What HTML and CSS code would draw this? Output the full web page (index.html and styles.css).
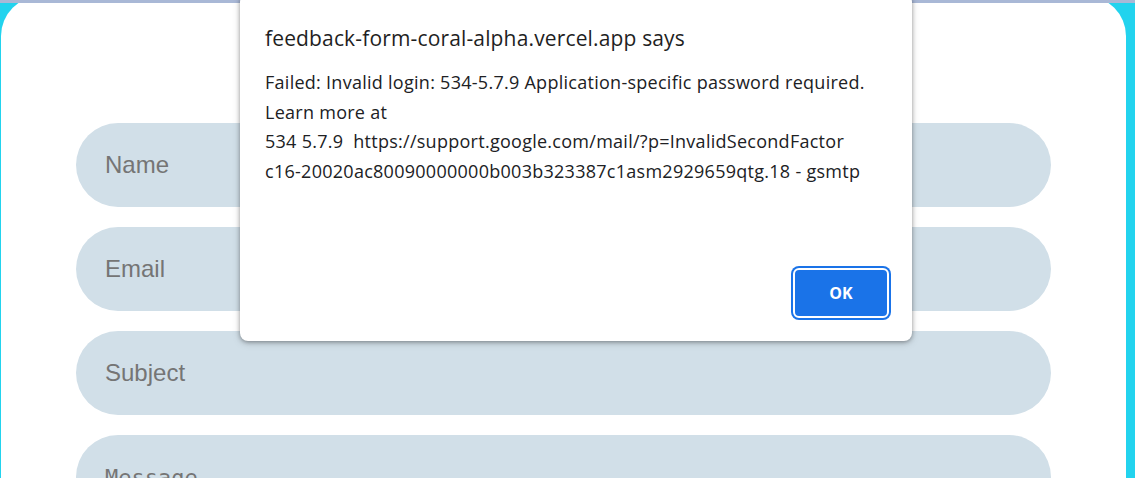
FILE: index.html
```html
<!DOCTYPE html>
<html lang="en">
<head>
<meta charset="utf-8">
<title>Feedback Form</title>
<link rel="stylesheet" href="styles.css">
</head>
<body>
<div class="topbar"></div>
<main class="card">
  <form class="form">
    <input class="field" type="text" placeholder="Name">
    <input class="field" type="email" placeholder="Email">
    <input class="field" type="text" placeholder="Subject">
    <textarea class="field area" placeholder="Message"></textarea>
  </form>
</main>
<div class="dialog" role="alertdialog">
  <div class="dlg-title">feedback-form-coral-alpha.vercel.app says</div>
  <div class="dlg-body">
    <div class="line">Failed: Invalid login: 534-5.7.9 Application-specific password required.</div>
    <div class="line">Learn more at</div>
    <div class="line">534 5.7.9&nbsp; https://support.google.com/mail/?p=InvalidSecondFactor</div>
    <div class="line">c16-20020ac80090000000b003b323387c1asm2929659qtg.18 - gsmtp</div>
  </div>
  <div class="dlg-actions">
    <button class="ok" type="button">OK</button>
  </div>
</div>
</body>
</html>
```

FILE: styles.css
```css
html, body {
  margin: 0;
  padding: 0;
  height: 100%;
  overflow: hidden;
}
body {
  background: #22d3ee;
  font-family: "Open Sans", "Noto Sans", sans-serif;
}
.topbar {
  position: absolute;
  top: 0;
  left: 0;
  right: 0;
  height: 3px;
  background: #a9b8d6;
  z-index: 2;
}
.card {
  margin: -4px 0 0 1px;
  width: 1125px;
  height: 600px;
  background: #ffffff;
  border-radius: 40px;
  display: flex;
  justify-content: center;
  padding-top: 127px;
  box-sizing: border-box;
}
.form {
  width: 975px;
  display: flex;
  flex-direction: column;
  gap: 20px;
}
.field {
  height: 84px;
  border: none;
  outline: none;
  border-radius: 42px;
  background: #d1dfe8;
  padding: 0 29px;
  font-family: "Liberation Sans", Arial, sans-serif;
  font-size: 24px;
  color: #333;
  box-sizing: border-box;
  resize: none;
}
.field::placeholder {
  color: #757575;
}
.area {
  height: 160px;
  padding-top: 30px;
  font-family: "DejaVu Sans Mono", monospace;
  font-size: 22px;
}
.dialog {
  position: absolute;
  left: 240px;
  top: -6px;
  width: 672px;
  height: 347px;
  background: #ffffff;
  border-radius: 8px;
  box-shadow: 0 1px 4px rgba(0, 0, 0, 0.35), 0 2px 8px rgba(0, 0, 0, 0.15);
  box-sizing: border-box;
  padding: 0 24px 0 25px;
  display: flex;
  flex-direction: column;
  color: #202124;
  z-index: 3;
}
.dlg-title {
  margin-top: 29px;
  font-size: 21px;
  letter-spacing: 0.15px;
  line-height: 30px;
  color: #1f1f1f;
}
.dlg-body {
  margin-top: 15px;
  font-size: 18px;
  letter-spacing: 0.27px;
  line-height: 29.7px;
  color: #202124;
}
.line {
  white-space: pre;
}
.dlg-actions {
  margin-top: auto;
  margin-bottom: 23px;
  display: flex;
  justify-content: flex-end;
}
.ok {
  width: 96px;
  height: 50px;
  margin-right: -1px;
  background: #1a73e8;
  color: #ffffff;
  border: 2px solid #ffffff;
  box-shadow: 0 0 0 2px #1a73e8;
  border-radius: 6px;
  font-family: "Open Sans", "Noto Sans", sans-serif;
  font-weight: 700;
  font-size: 16px;
  letter-spacing: 0;
}
```
